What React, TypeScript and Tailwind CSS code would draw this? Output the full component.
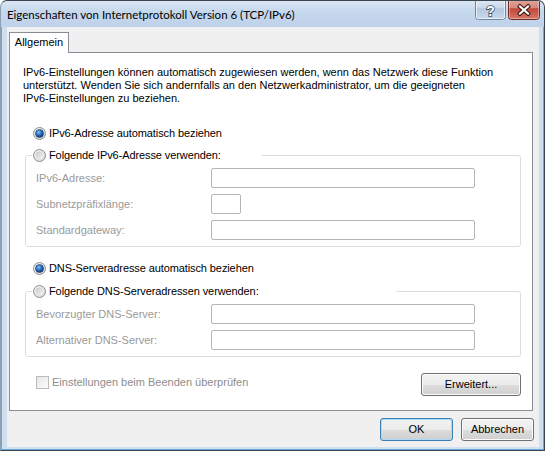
import React from "react";

// radio button in the Windows 7 style, drawn as svg
const Radio = ({ checked }: { checked?: boolean }) => {
  const id = checked ? "radio-on" : "radio-off";
  return (
    <svg width="13" height="13" viewBox="0 0 13 13" className="shrink-0">
      <defs>
        <linearGradient id={`${id}-ring`} x1="0" y1="0" x2="1" y2="1">
          <stop offset="0" stopColor="#f6f6f6" />
          <stop offset="1" stopColor="#d4d4d4" />
        </linearGradient>
        <linearGradient id={`${id}-core`} x1="0" y1="0" x2="1" y2="1">
          <stop offset="0" stopColor="#c9c9c9" />
          <stop offset="1" stopColor="#f7f7f7" />
        </linearGradient>
        <radialGradient id={`${id}-dot`} cx="0.4" cy="0.35" r="0.7">
          <stop offset="0" stopColor="#8cc4f5" />
          <stop offset="0.45" stopColor="#2f76c8" />
          <stop offset="1" stopColor="#0c2b63" />
        </radialGradient>
      </defs>
      <circle cx="6.5" cy="6.5" r="6" fill={`url(#${id}-ring)`} stroke="#8e8f8f" />
      <circle
        cx="6.5"
        cy="6.5"
        r="4"
        fill={checked ? `url(#${id}-dot)` : `url(#${id}-core)`}
        stroke={checked ? "#1b3f75" : "none"}
        strokeWidth="0.6"
      />
    </svg>
  );
};

const RadioRow = ({ checked, label }: { checked?: boolean; label: string }) => (
  <div className="flex items-center h-[14px] gap-[2px]">
    <Radio checked={checked} />
    <span className="pl-px tracking-[-0.1px]">{label}</span>
  </div>
);

// disabled label + edit box inside a group
const Field = ({ label, small }: { label: string; small?: boolean }) => (
  <div className="flex items-center h-[20px]">
    <span className="w-[175px] text-[#9a9a9a]">{label}</span>
    <div
      className={`h-[20px] ${small ? "w-[30px]" : "w-[264px]"} bg-white border border-[#b5b5b5] rounded-[2px]`}
    />
  </div>
);

const Button = ({ label, width, primary }: { label: string; width: string; primary?: boolean }) => (
  <div
    className={`${width} h-[23px] flex items-center justify-center rounded-[3px] border bg-[linear-gradient(to_bottom,#f2f2f2_0%,#ebebeb_50%,#dddddd_51%,#cfcfcf_100%)] ${
      primary
        ? "border-[#3c7fb1] shadow-[inset_0_0_0_1px_#a9dcf6]"
        : "border-[#707070] shadow-[inset_0_0_0_1px_#fcfcfc]"
    }`}
  >
    {label}
  </div>
);

const HelpButton = () => (
  <svg width="31" height="19" viewBox="0 0 31 19">
    <defs>
      <linearGradient id="help-bg" x1="0" y1="0" x2="0" y2="1">
        <stop offset="0" stopColor="#e4edf7" />
        <stop offset="0.45" stopColor="#c9d8ea" />
        <stop offset="0.5" stopColor="#b4c8e0" />
        <stop offset="1" stopColor="#c8d9ed" />
      </linearGradient>
    </defs>
    <rect x="0.5" y="-3" width="30" height="21.5" rx="3" fill="url(#help-bg)" stroke="#73869e" />
    <rect x="1.5" y="-2" width="28" height="19.5" rx="2" fill="none" stroke="#ffffff" strokeOpacity="0.6" />
    <text
      x="15.5"
      y="14.5"
      textAnchor="middle"
      fontFamily="'Liberation Sans', Arial, sans-serif"
      fontWeight="700"
      fontSize="14"
      fill="#ffffff"
      stroke="#3a4c63"
      strokeWidth="1.6"
      paintOrder="stroke"
    >
      ?
    </text>
  </svg>
);

const CloseButton = () => (
  <svg width="32" height="19" viewBox="0 0 32 19">
    <defs>
      <linearGradient id="close-bg" x1="0" y1="0" x2="0" y2="1">
        <stop offset="0" stopColor="#e5aca3" />
        <stop offset="0.45" stopColor="#d7887c" />
        <stop offset="0.5" stopColor="#c2483a" />
        <stop offset="1" stopColor="#d6796b" />
      </linearGradient>
    </defs>
    <rect x="0.5" y="-3" width="31" height="21.5" rx="3" fill="url(#close-bg)" stroke="#6e2a23" />
    <rect x="1.5" y="-2" width="29" height="19.5" rx="2" fill="none" stroke="#ffffff" strokeOpacity="0.35" />
    <g strokeLinecap="square">
      <path d="M12 5.5 L20 12.5 M20 5.5 L12 12.5" stroke="#3b1512" strokeWidth="4.2" />
      <path d="M12 5.5 L20 12.5 M20 5.5 L12 12.5" stroke="#ffffff" strokeWidth="2.2" />
    </g>
  </svg>
);

const App = () => {
  return (
    <div className="w-[545px] h-[451px] flex flex-col rounded-t-[7px] border border-[#3c4653] border-l-[#8d9fb3] bg-[#cfdff0] shadow-[inset_1px_0_#6aa8de,inset_-1px_0_#6aa8de,inset_0_-1px_#6aa8de] font-['Liberation_Sans',Arial,sans-serif] text-[11px] leading-[13px] text-black overflow-hidden">
      {/* Title bar */}
      <div className="h-[26px] shrink-0 flex justify-between rounded-t-[6px] bg-[linear-gradient(to_bottom,#dae6f4_0%,#c6d8ed_40%,#bed2ea_100%)]">
        <div className="pl-[6px] pt-[7px] font-['Lato',sans-serif] text-[11.5px] leading-[14px] text-black">
          Eigenschaften von Internetprotokoll Version 6 (TCP/IPv6)
        </div>
        <div className="flex items-start gap-[2px] pr-[4px]">
          <HelpButton />
          <CloseButton />
        </div>
      </div>

      {/* Client area */}
      <div className="flex-1 ml-[6px] mr-[5px] mb-[3px] bg-[#f0f0f0] flex flex-col">
        {/* Tab strip */}
        <div className="flex mt-[5px] ml-[2px]">
          <div className="relative z-10 h-[21px] w-[60px] -mb-px flex items-center justify-center bg-white border border-b-0 border-[#898c95] pb-px">
            Allgemein
          </div>
        </div>

        {/* Tab page */}
        <div className="ml-[2px] w-[524px] h-[359px] bg-white border border-[#898c95] flex flex-col">
          <div className="pl-[13px] pt-[13px]">
            <div>IPv6-Einstellungen können automatisch zugewiesen werden, wenn das Netzwerk diese Funktion</div>
            <div>unterstützt. Wenden Sie sich andernfalls an den Netzwerkadministrator, um die geeigneten</div>
            <div>IPv6-Einstellungen zu beziehen.</div>
          </div>

          <div className="ml-[23px] mt-[21px]">
            <RadioRow checked label="IPv6-Adresse automatisch beziehen" />
          </div>

          <fieldset className="ml-[15px] mt-[8px] w-[496px] border border-[#d5dfe5] rounded-[3px] pl-[6px] pt-[6px] pb-[6px]">
            <legend className="w-[230px] h-[14px] pl-px">
              <RadioRow label="Folgende IPv6-Adresse verwenden:" />
            </legend>
            <div className="pl-[4px] flex flex-col gap-[6px]">
              <Field label="IPv6-Adresse:" />
              <Field label="Subnetzpräfixlänge:" small />
              <Field label="Standardgateway:" />
            </div>
          </fieldset>

          <div className="ml-[23px] mt-[14px]">
            <RadioRow checked label="DNS-Serveradresse automatisch beziehen" />
          </div>

          <fieldset className="ml-[15px] mt-[9px] w-[496px] border border-[#d5dfe5] rounded-[3px] pl-[6px] pt-[6px] pb-[6px]">
            <legend className="w-[364px] h-[14px] pl-px">
              <RadioRow label="Folgende DNS-Serveradressen verwenden:" />
            </legend>
            <div className="pl-[4px] flex flex-col gap-[6px]">
              <Field label="Bevorzugter DNS-Server:" />
              <Field label="Alternativer DNS-Server:" />
            </div>
          </fieldset>

          <div className="mt-[16px] pl-[26px] pr-[11px] flex justify-between items-start">
            <div className="flex items-center gap-[2px] mt-[3px] h-[13px]">
              <div className="w-[13px] h-[13px] border border-[#bcbcbc] bg-[linear-gradient(135deg,#e6e6e6,#fbfbfb)]" />
              <span className="pl-px text-[#8d8d8d]">Einstellungen beim Beenden überprüfen</span>
            </div>
            <Button label="Erweitert..." width="w-[100px]" />
          </div>
        </div>

        {/* Dialog buttons */}
        <div className="mt-[7px] pr-[5px] flex justify-end gap-[8px]">
          <Button label="OK" width="w-[73px]" primary />
          <Button label="Abbrechen" width="w-[73px]" />
        </div>
      </div>
    </div>
  );
};

export default App;
